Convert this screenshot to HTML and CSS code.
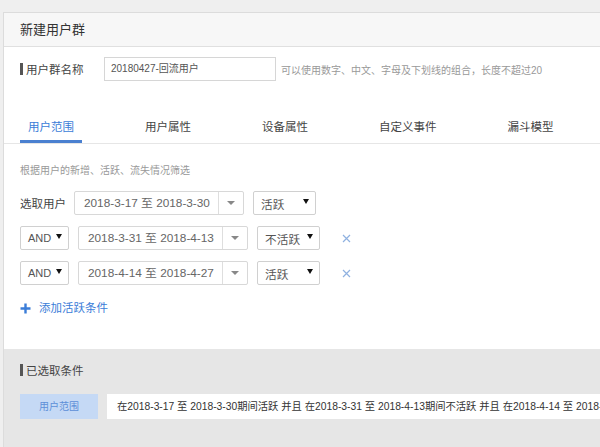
FILE: index.html
```html
<!DOCTYPE html>
<html lang="zh">
<head>
<meta charset="utf-8">
<title>新建用户群</title>
<link rel="stylesheet" href="styles.css">
</head>
<body>
<div class="card">
  <div class="card-head">新建用户群</div>
  <div class="name-row">
    <span class="label"><i class="bar"></i>用户群名称</span>
    <div class="text-input">20180427-回流用户</div>
    <span class="hint">可以使用数字、中文、字母及下划线的组合，长度不超过20</span>
  </div>
  <div class="tabs">
    <div class="tab active">用户范围</div>
    <div class="tab">用户属性</div>
    <div class="tab">设备属性</div>
    <div class="tab">自定义事件</div>
    <div class="tab">漏斗模型</div>
  </div>
  <div class="desc">根据用户的新增、活跃、流失情况筛选</div>
  <div class="rows">
    <div class="row">
      <span class="row-label">选取用户</span>
      <div class="date"><span class="date-text">2018-3-17 至 2018-3-30</span><span class="date-arrow"><i class="tri-gray"></i></span></div>
      <div class="select state"><span>活跃</span><i class="tri"></i></div>
    </div>
    <div class="row">
      <div class="select logic"><span>AND</span><i class="tri"></i></div>
      <div class="date"><span class="date-text">2018-3-31 至 2018-4-13</span><span class="date-arrow"><i class="tri-gray"></i></span></div>
      <div class="select state"><span>不活跃</span><i class="tri"></i></div>
      <svg class="close" width="9" height="9" viewBox="0 0 9 9"><path d="M1 1L8 8M8 1L1 8" stroke="#8fb1e0" stroke-width="1.2" fill="none"/></svg>
    </div>
    <div class="row">
      <div class="select logic"><span>AND</span><i class="tri"></i></div>
      <div class="date"><span class="date-text">2018-4-14 至 2018-4-27</span><span class="date-arrow"><i class="tri-gray"></i></span></div>
      <div class="select state"><span>活跃</span><i class="tri"></i></div>
      <svg class="close" width="9" height="9" viewBox="0 0 9 9"><path d="M1 1L8 8M8 1L1 8" stroke="#8fb1e0" stroke-width="1.2" fill="none"/></svg>
    </div>
  </div>
  <div class="add">
    <svg class="plus" width="11" height="11" viewBox="0 0 11 11"><path d="M5.5 0.5V10.5M0.5 5.5H10.5" stroke="#3b7dd8" stroke-width="2.4" fill="none"/></svg>
    <span>添加活跃条件</span>
  </div>
  <div class="chosen">
    <div class="chosen-title"><i class="bar"></i>已选取条件</div>
    <div class="chosen-row">
      <div class="chosen-tag">用户范围</div>
      <div class="chosen-text">在2018-3-17 至 2018-3-30期间活跃 并且 在2018-3-31 至 2018-4-13期间不活跃 并且 在2018-4-14 至 2018-4-27期间活跃</div>
    </div>
  </div>
</div>
</body>
</html>
```
FILE: styles.css
```css
html, body {
  margin: 0;
  padding: 0;
  height: 100%;
  overflow: hidden;
}
body {
  background: #efefef;
  font-family: "Liberation Sans", "Noto Sans CJK SC", sans-serif;
  color: #555;
  padding: 12px 0 0 3px;
  box-sizing: border-box;
}
.card {
  width: 640px;
  height: 100%;
  background: #fff;
  border-left: 1px solid #dcdcdc;
  border-top: 1px solid #dcdcdc;
  display: flex;
  flex-direction: column;
}
.card-head {
  height: 33px;
  line-height: 33px;
  background: #f7f7f7;
  border-bottom: 1px solid #e0e0e0;
  padding-left: 16px;
  font-size: 13px;
  color: #333;
}
.bar {
  display: inline-block;
  width: 3px;
  height: 12px;
  background: #555;
  margin-right: 3px;
  vertical-align: -1px;
}
.name-row {
  display: flex;
  align-items: center;
  margin-top: 10px;
  padding-left: 16px;
  height: 24px;
}
.label {
  font-size: 11.5px;
  color: #444;
  width: 84px;
}
.text-input {
  width: 164px;
  height: 22px;
  line-height: 22px;
  border: 1px solid #d6d6d6;
  padding-left: 6px;
  font-size: 10px;
  color: #555;
}
.hint {
  margin-left: 5px;
  font-size: 10px;
  color: #999;
  white-space: nowrap;
}
.tabs {
  display: flex;
  gap: 55px;
  margin-top: 38px;
  padding-left: 16px;
  border-bottom: 1px solid #e6e6e6;
}
.tab {
  line-height: 16px;
  padding: 0 8px 5px;
  border-bottom: 3px solid transparent;
  font-size: 11.5px;
  color: #444;
  white-space: nowrap;
}
.tab.active {
  color: #3b7dd8;
  border-bottom-color: #4a80d0;
}
.desc {
  margin-top: 20px;
  padding-left: 16px;
  line-height: 14px;
  font-size: 10px;
  color: #999;
}
.rows {
  display: flex;
  flex-direction: column;
  gap: 11px;
  margin-top: 13px;
  padding-left: 16px;
}
.row {
  display: flex;
  align-items: center;
  height: 24px;
}
.row-label {
  width: 54px;
  font-size: 11.5px;
  color: #444;
}
.date {
  display: flex;
  width: 168px;
  height: 22px;
  border: 1px solid #d8d8d8;
  border-radius: 2px;
  margin-right: 9px;
}
.date-text {
  flex: 1;
  line-height: 22px;
  padding-left: 9px;
  font-size: 11.8px;
  color: #666;
  white-space: nowrap;
}
.date-arrow {
  width: 24px;
  border-left: 1px solid #dedede;
  display: flex;
  align-items: center;
  justify-content: center;
}
.tri-gray {
  width: 0;
  height: 0;
  border-left: 4px solid transparent;
  border-right: 4px solid transparent;
  border-top: 4px solid #888;
}
.select {
  display: flex;
  align-items: center;
  justify-content: space-between;
  height: 22px;
  border: 1px solid #d0d0d0;
  border-radius: 2px;
  padding: 0 6px 0 7px;
  box-sizing: content-box;
  color: #555;
}
.state {
  width: 48px;
  font-size: 11.7px;
}
.logic {
  width: 34px;
  margin-right: 9px;
  font-size: 11px;
}
.tri {
  width: 0;
  height: 0;
  border-left: 3px solid transparent;
  border-right: 3px solid transparent;
  border-top: 5px solid #111;
  margin-top: -3px;
}
.close {
  margin-left: 22px;
}
.add {
  display: flex;
  align-items: center;
  margin-top: 15px;
  padding-left: 16px;
  line-height: 16px;
  font-size: 11.5px;
  color: #3b7dd8;
}
.plus {
  margin-right: 8px;
}
.chosen {
  flex: 1;
  margin-top: 33px;
  background: #e6e6e6;
  padding: 14px 0 0 16px;
}
.chosen-title {
  line-height: 16px;
  font-size: 11.5px;
  color: #444;
}
.chosen-row {
  display: flex;
  margin-top: 15px;
  height: 25px;
}
.chosen-tag {
  width: 78px;
  background: #c5d9f5;
  color: #5d8fd8;
  font-size: 10px;
  line-height: 25px;
  text-align: center;
  margin-right: 9px;
}
.chosen-text {
  flex: 1;
  background: #fff;
  line-height: 25px;
  padding-left: 10px;
  font-size: 10.3px;
  color: #333;
  white-space: nowrap;
  overflow: hidden;
}
```
